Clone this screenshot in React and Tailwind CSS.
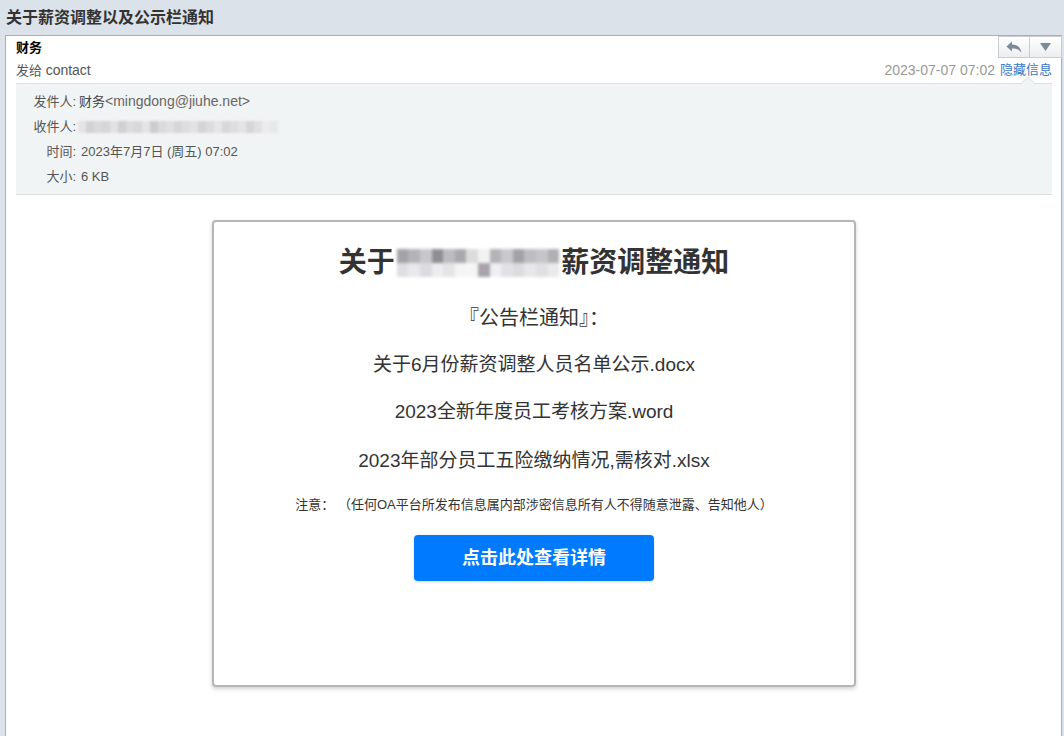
const font = { fontFamily: '"Liberation Sans", "Noto Sans CJK SC", sans-serif' };

const headBlur = [
  "bg-[#e4e4e6]", "bg-[#d2d2d4]", "bg-[#dadadc]", "bg-[#d6d6d8]", "bg-[#e2e2e4]", "bg-[#d0d0d2]",
  "bg-[#dcdcde]", "bg-[#d8d8da]", "bg-[#e4e4e6]", "bg-[#cdcdcf]", "bg-[#dadadc]", "bg-[#e0e0e2]",
  "bg-[#d6d6d8]", "bg-[#dedee0]", "bg-[#e2e2e4]", "bg-[#d4d4d6]", "bg-[#dcdcde]", "bg-[#e6e6e8]",
  "bg-[#d8d8da]", "bg-[#dedee0]", "bg-[#e4e4e6]", "bg-[#d6d6d8]", "bg-[#e0e0e2]", "bg-[#ececee]",
  "bg-[#e8e8ea]",
];

const titleTop = [
  "bg-[#a3a3aa]", "bg-[#b4b3b8]", "bg-[#c8c8cc]", "bg-[#8f8e95]", "bg-[#bdbdc1]", "bg-[#a9a9ad]",
  "bg-[#dcdcdd]", "bg-[#f2f2f2]", "bg-[#b3b3b8]", "bg-[#c9c9cd]", "bg-[#a2a2a7]", "bg-[#bebec2]",
  "bg-[#c6c6ca]", "bg-[#b0b0b4]",
];
const titleBottom = [
  "bg-[#dfdfe3]", "bg-[#e9e9eb]", "bg-[#dcdce0]", "bg-[#ededef]", "bg-[#e4e4e6]", "bg-[#f5f5f5]",
  "bg-[#f6f6f6]", "bg-[#a9a4ab]", "bg-[#eef0f1]", "bg-[#e2e2e6]", "bg-[#dcdcdf]", "bg-[#e7e7ea]",
  "bg-[#e0e0e3]", "bg-[#eaeaec]",
];

function ReplyButtons() {
  return (
    <div className="flex h-[22px] -mr-[10px] border border-[#c8ccd0] bg-gradient-to-b from-white to-[#eceef0]">
      <div className="w-[31px] flex items-center justify-center border-r border-[#c8ccd0]">
        <svg width="16" height="12" viewBox="0 0 16 12">
          <path d="M6 0.5 L0.5 5.5 L6 10.5 L6 7.5 C10 7.2 12.8 8.5 15.5 11.5 C14.6 6.5 11.5 3.8 6 3.5 Z" fill="#7d8a97" />
        </svg>
      </div>
      <div className="w-[31px] flex items-center justify-center">
        <svg width="11" height="8" viewBox="0 0 11 8">
          <path d="M0 0 L11 0 L5.5 8 Z" fill="#7d8a97" />
        </svg>
      </div>
    </div>
  );
}

function InfoRow({ label, children }) {
  return (
    <div className="flex h-[25px] items-center">
      <div className="w-[60px] text-right shrink-0">{label}</div>
      <div className="flex items-center">{children}</div>
    </div>
  );
}

export default function App() {
  return (
    <div className="h-[736px] w-[1064px] overflow-hidden bg-[#dbe2e9] flex flex-col" style={font}>
      <div className="h-[35px] flex items-center pl-[6px] text-[16px] font-bold text-[#333]">
        关于薪资调整以及公示栏通知
      </div>

      <div className="flex-1 ml-[5px] mr-[2px] bg-white border-l border-t border-r border-[#a9afb5] pl-[10px] pr-[9px]">
        <div className="flex justify-between items-start h-[22px]">
          <div className="text-[13px] font-bold text-black leading-[22px] pt-[1px]">财务</div>
          <ReplyButtons />
        </div>
        <div className="flex justify-between items-center h-[24px] text-[13px]">
          <div className="text-[#555]">
            发给 <span className="text-[14px]">contact</span>
          </div>
          <div className="flex items-center gap-[5px]">
            <span className="text-[#999] text-[14px]">2023-07-07 07:02</span>
            <span className="text-[#3a78c3]">隐藏信息</span>
          </div>
        </div>

        <div className="relative mt-[1px] bg-[#f1f4f4] border-t border-b border-[#dcdfdf] py-[5px] text-[13px] text-[#555]">
          <svg className="absolute -top-[8px] right-[16px]" width="16" height="9" viewBox="0 0 16 9">
            <path d="M0 8.5 L8 0.8 L16 8.5" fill="#f1f4f4" stroke="#dcdfdf" strokeWidth="1" />
          </svg>
          <InfoRow label="发件人:">
            <span className="ml-[3px] text-[#444]">财务</span>
            <span className="text-[#666] text-[14px]">&lt;mingdong@jiuhe.net&gt;</span>
          </InfoRow>
          <InfoRow label="收件人:">
            <div className="flex h-[12px] ml-[2px] blur-[1px]">
              {headBlur.map((c, i) => (
                <div key={i} className={"w-[8px] h-full " + c} />
              ))}
            </div>
          </InfoRow>
          <InfoRow label="时间:">
            <span className="ml-[5px]">2023年7月7日 (周五) 07:02</span>
          </InfoRow>
          <InfoRow label="大小:">
            <span className="ml-[5px]">6 KB</span>
          </InfoRow>
        </div>

        <div className="mt-[25px] mx-auto w-[644px] border-2 border-[#b6b6b6] rounded-[4px] bg-white shadow-[0_2px_4px_rgba(0,0,0,0.18)] pt-[21px] pb-[104px] text-[#333] text-center">
          <div className="h-[40px] flex items-center justify-center text-[28px] font-bold">
            <span>关于</span>
            <div className="flex flex-col mx-[2px] blur-[1.5px]">
              <div className="flex">
                {titleTop.map((c, i) => (
                  <div key={i} className={"w-[11.6px] h-[14px] " + c} />
                ))}
              </div>
              <div className="flex">
                {titleBottom.map((c, i) => (
                  <div key={i} className={"w-[11.6px] h-[14px] " + c} />
                ))}
              </div>
            </div>
            <span>薪资调整通知</span>
          </div>
          <div className="mt-[20px] h-[30px] leading-[30px] text-[20px]">『公告栏通知』：</div>
          <div className="mt-[17px] h-[30px] leading-[30px] text-[19px]">关于6月份薪资调整人员名单公示.docx</div>
          <div className="mt-[17px] h-[30px] leading-[30px] text-[19px]">2023全新年度员工考核方案.word</div>
          <div className="mt-[19px] h-[30px] leading-[30px] text-[19px]">2023年部分员工五险缴纳情况,需核对.xlsx</div>
          <div className="mt-[19px] h-[20px] leading-[20px] text-[13px]">注意：&nbsp;（任何OA平台所发布信息属内部涉密信息所有人不得随意泄露、告知他人）</div>
          <div className="mt-[20px] flex justify-center">
            <div className="w-[240px] h-[46px] rounded-[4px] bg-[#007bff] text-white text-[18px] font-bold flex items-center justify-center shadow-[0_1px_3px_rgba(0,0,0,0.15)]">
              点击此处查看详情
            </div>
          </div>
        </div>
      </div>
    </div>
  );
}
